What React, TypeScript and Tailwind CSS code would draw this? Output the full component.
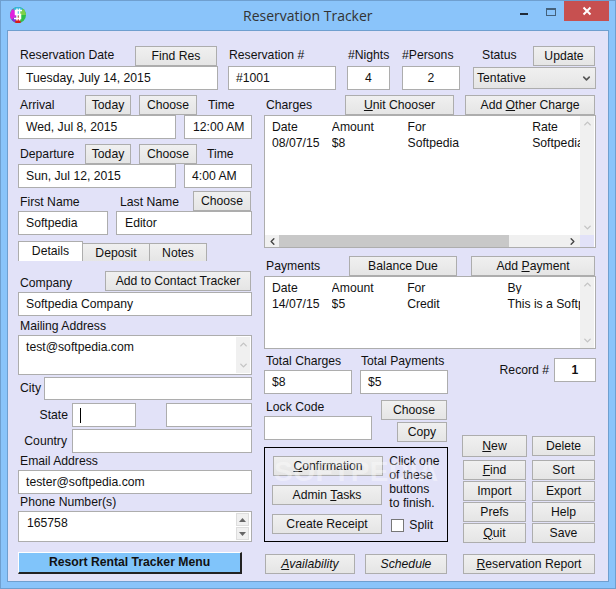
import React from "react";
import { ChevronDown, ChevronLeft, ChevronRight, ChevronUp } from "lucide-react";

type BtnProps = { children: React.ReactNode; className?: string };

// Old-style gradient push button. Width/height come in through className.
function Btn({ children, className = "" }: BtnProps) {
  return (
    <button className={`flex h-5 shrink-0 items-center justify-center border border-[#adadad] bg-gradient-to-b from-[#f0f0f0] to-[#e5e5e5] text-[#111] ${className}`}>
      {children}
    </button>
  );
}

function Field({ value, className = "", align = "pl-[7px]" }: { value?: string; className?: string; align?: string }) {
  return (
    <div className={`flex h-6 shrink-0 items-center truncate border border-[#adadad] bg-white text-[#111] ${align} ${className}`}>
      {value}
    </div>
  );
}

function VScroll({ className = "" }: { className?: string }) {
  return (
    <div className={`flex w-[14px] shrink-0 flex-col items-center justify-between bg-[#f0f0f0] py-[2px] text-[#c4c4c4] ${className}`}>
      <ChevronUp size={11} strokeWidth={3} />
      <ChevronDown size={11} strokeWidth={3} />
    </div>
  );
}

function Row({ cells, cols }: { cells: string[]; cols: string[] }) {
  return (
    <div className="flex h-4 items-center whitespace-nowrap">
      {cells.map((c, i) => (
        <div key={c} className={`overflow-hidden ${cols[i]}`}>{c}</div>
      ))}
    </div>
  );
}

function AppIcon() {
  return (
    <svg width="16" height="16" viewBox="0 0 16 16" className="shrink-0">
      <circle cx="8" cy="8" r="8" fill="#2fbf4a" />
      <path d="M8 8 L3 1.8 A8 8 0 0 1 13 1.8 Z" fill="#35b5dc" />
      <path d="M8 8 L13 1.8 A8 8 0 0 1 16 8 Z" fill="#7fd04a" />
      <path d="M8 8 L3 1.8 A8 8 0 0 0 1.5 12.7 Z" fill="#e020e0" />
      <path d="M8 8 L1.5 12.7 A8 8 0 0 0 5 15.4 Z" fill="#8a2ce0" />
      <path d="M8 8 L5 15.4 A8 8 0 0 0 11 15.4 Z" fill="#d81818" />
      <path d="M12 3.5 H5.5 V7.5 H10.5 V11.5 H4 M7 1.5 V13.5 M9.5 1.5 V13.5" stroke="#fff" strokeWidth="1.5" fill="none" />
    </svg>
  );
}

const chargeCols = ["w-[60px]", "w-[76px]", "w-[125px]", "w-[48px]"];
const paymentCols = ["w-[60px]", "w-[76px]", "w-[101px]", "w-[73px]"];

export default function App() {
  return (
    <div className="flex h-[589px] w-[616px] flex-col border border-[#6f9fcf] bg-[#8ac4fa] font-['Liberation_Sans',Arial,sans-serif] text-[12.2px] leading-none text-[#111]">
      {/* title bar */}
      <div className="flex h-[29px] shrink-0 items-start">
        <div className="mt-[6px] ml-[9px]"><AppIcon /></div>
        <div className="mt-[5px] flex-1 pl-[217px] font-['Open_Sans',sans-serif] text-[14px] leading-[20px] text-[#333]">Reservation Tracker</div>
        <div className="mt-[12px] h-[2px] w-[8px] bg-[#1f2a38]" />
        <div className="mt-[7px] ml-[18px] h-[8px] w-[10px] border border-t-2 border-[#44617b]" />
        <div className="mr-[6px] ml-[8px] flex h-[20px] w-[45px] items-center justify-center bg-[#c75050]">
          <svg width="10" height="10" viewBox="0 0 10 10"><path d="M1.5 1.5 L8.5 8.5 M8.5 1.5 L1.5 8.5" stroke="#fff" strokeWidth="2" /></svg>
        </div>
      </div>

      {/* client area */}
      <div className="ml-[6px] flex h-[552px] w-[602px] flex-col border border-[#6f9fcf] bg-[#e2e2f8] pt-[15px] pl-[10px]">
        {/* top row */}
        <div className="flex">
          <div className="w-[200px]">
            <div className="flex h-5 items-center pl-[2px]"><span className="-mt-[2px] w-[115px]">Reservation Date</span><Btn className="w-[82px]">Find Res</Btn></div>
            <Field value="Tuesday, July 14, 2015" className="w-[200px]" />
          </div>
          <div className="ml-[10px] w-[108px]">
            <div className="flex h-5 items-center pb-[2px] pl-[1px]">Reservation #</div>
            <Field value="#1001" />
          </div>
          <div className="ml-[11px] w-[43px]">
            <div className="flex h-5 items-center pb-[2px] pl-[1px] whitespace-nowrap">#Nights</div>
            <Field value="4" align="justify-center" />
          </div>
          <div className="ml-[12px] w-[58px]">
            <div className="flex h-5 items-center pb-[2px] whitespace-nowrap">#Persons</div>
            <Field value="2" align="justify-center" />
          </div>
          <div className="ml-[13px] w-[123px]">
            <div className="flex h-5 items-center pl-[9px]"><span className="-mt-[2px] w-[51px]">Status</span><Btn className="w-[62px]">Update</Btn></div>
            <div className="mt-[1px] flex h-[22px] items-center justify-between border border-[#adadad] bg-gradient-to-b from-[#f0f0f0] to-[#e5e5e5] pr-[3px] pl-[3px]">
              Tentative
              <ChevronDown size={11} strokeWidth={3.5} className="text-[#555]" />
            </div>
          </div>
        </div>

        <div className="mt-[5px] flex">
          {/* left column */}
          <div className="w-[234px]">
            <div className="flex h-5 items-center pl-[2px]">
              <span className="w-[65px]">Arrival</span>
              <Btn className="w-[46px]">Today</Btn>
              <Btn className="ml-2 w-[58px]">Choose</Btn>
              <span className="ml-[11px]">Time</span>
            </div>
            <div className="flex gap-2">
              <Field value="Wed, Jul 8, 2015" className="w-[158px]" />
              <Field value="12:00 AM" className="w-[68px]" align="pl-2" />
            </div>
            <div className="mt-[5px] flex h-5 items-center pl-[2px]">
              <span className="w-[65px]">Departure</span>
              <Btn className="w-[46px]">Today</Btn>
              <Btn className="ml-2 w-[58px]">Choose</Btn>
              <span className="ml-[10px]">Time</span>
            </div>
            <div className="flex gap-2">
              <Field value="Sun, Jul 12, 2015" className="w-[158px]" />
              <Field value="4:00 AM" className="w-[68px]" />
            </div>
            <div className="mt-[3px] flex h-5 items-center pl-[2px]">
              <span className="mt-[2px] w-[100px]">First Name</span>
              <span className="mt-[2px] w-[73px]">Last Name</span>
              <Btn className="w-[58px]">Choose</Btn>
            </div>
            <div className="flex gap-2">
              <Field value="Softpedia" className="w-[90px]" />
              <Field value="Editor" className="w-[136px]" align="pl-2" />
            </div>

            {/* tabs */}
            <div className="mt-[6px] flex h-5 items-end">
              <div className="flex h-5 w-[65px] items-center justify-center border border-b-0 border-[#adadad] bg-white">Details</div>
              <div className="flex h-[18px] w-[67px] items-center justify-center border-y border-r border-b-0 border-[#adadad] bg-gradient-to-b from-[#f0f0f0] to-[#e5e5e5] pt-px">Deposit</div>
              <div className="flex h-[18px] w-[57px] items-center justify-center border-y border-r border-b-0 border-[#adadad] bg-gradient-to-b from-[#f0f0f0] to-[#e5e5e5] pt-px">Notes</div>
            </div>

            <div className="mt-[10px] flex h-[21px] items-end pl-[2px]">
              <span className="w-[85px] pb-[3px]">Company</span>
              <Btn className="mb-[1px] w-[146px]">Add to Contact Tracker</Btn>
            </div>
            <Field value="Softpedia Company" />
            <div className="flex h-[19px] items-center pt-px pl-[2px]">Mailing Address</div>
            <div className="flex h-10 border border-[#adadad] bg-white">
              <div className="flex-1 pt-[5px] pl-[7px]">test@softpedia.com</div>
              <VScroll className="mr-[1px] my-px" />
            </div>
            <div className="mt-[2px] flex items-center">
              <span className="w-[26px] pl-[2px]">City</span>
              <Field className="h-[23px] w-[208px]" />
            </div>
            <div className="mt-[3px] flex items-center">
              <span className="w-[54px] pr-[4px] text-right">State</span>
              <div className="flex h-6 w-[64px] items-center border border-[#adadad] bg-white pl-[7px]">
                <div className="h-[15px] w-px bg-black" />
              </div>
              <Field className="ml-[30px] w-[86px]" />
            </div>
            <div className="mt-[2px] flex items-center">
              <span className="w-[54px] pr-[5px] text-right">Country</span>
              <Field className="w-[180px]" />
            </div>
            <div className="flex h-[17px] items-center pl-[2px]">Email Address</div>
            <Field value="tester@softpedia.com" />
            <div className="flex h-[17px] items-center pl-[2px]">Phone Number(s)</div>
            <div className="flex h-[31px] border border-[#adadad] bg-white">
              <div className="flex-1 pt-[5px] pl-2">165758</div>
              <div className="m-px mr-[2px] flex w-[13px] flex-col gap-px text-[#666]">
                <div className="flex flex-1 items-center justify-center border border-[#ddd] bg-[#f0f0f0]">
                  <svg width="7" height="4" viewBox="0 0 7 4"><path d="M3.5 0 L7 4 H0 Z" fill="#666" /></svg>
                </div>
                <div className="flex flex-1 items-center justify-center border border-[#ddd] bg-[#f0f0f0]">
                  <svg width="7" height="4" viewBox="0 0 7 4"><path d="M0 0 H7 L3.5 4 Z" fill="#666" /></svg>
                </div>
              </div>
            </div>
            <button className="mt-[10px] flex h-[22px] w-[224px] items-center justify-center border-t border-r-2 border-b-2 border-l border-t-white border-r-[#222] border-b-[#222] border-l-white bg-[#80c4fa] font-bold">
              Resort Rental Tracker Menu
            </button>
          </div>

          {/* right column */}
          <div className="ml-[12px] w-[332px]">
            <div className="flex h-5 items-center pl-[2px]">
              <span className="w-[79px]">Charges</span>
              <Btn className="w-[109px]"><span><u>U</u>nit Chooser</span></Btn>
              <Btn className="ml-[11px] w-[130px]"><span>Add <u>O</u>ther Charge</span></Btn>
            </div>
            <div className="flex h-[133px] border border-[#adadad] bg-white">
              <div className="flex min-w-0 flex-1 flex-col">
                <div className="flex-1 pt-[3px] pl-[7px]">
                  <Row cells={["Date", "Amount", "For", "Rate"]} cols={chargeCols} />
                  <Row cells={["08/07/15", "$8", "Softpedia", "Softpedia"]} cols={chargeCols} />
                </div>
                <div className="flex h-3 items-center bg-[#f0f0f0] text-[#444]">
                  <ChevronLeft size={11} strokeWidth={3} className="ml-[2px] shrink-0" />
                  <div className="ml-[1px] h-full w-[230px] bg-[#c8c8c8]" />
                  <div className="flex-1" />
                  <ChevronRight size={11} strokeWidth={3} className="mr-[2px] shrink-0" />
                </div>
              </div>
              <div className="mr-px flex w-[14px] shrink-0 flex-col">
                <VScroll className="flex-1" />
                <div className="h-3 bg-[#e2e2f8]" />
              </div>
            </div>

            <div className="mt-2 flex h-5 items-center pl-[2px]">
              <span className="w-[83px]">Payments</span>
              <Btn className="w-[108px]">Balance Due</Btn>
              <Btn className="ml-[14px] w-[124px]"><span>Add <u>P</u>ayment</span></Btn>
            </div>
            <div className="flex h-[73px] border border-[#adadad] bg-white">
              <div className="min-w-0 flex-1 pt-[3px] pl-[7px]">
                <Row cells={["Date", "Amount", "For", "By"]} cols={paymentCols} />
                <Row cells={["14/07/15", "$5", "Credit", "This is a Softpedia"]} cols={paymentCols} />
              </div>
              <VScroll className="mr-px" />
            </div>

            <div className="flex">
              {/* totals, lock code, finish box */}
              <div className="w-[184px]">
                <div className="flex h-[21px] items-center pt-[3px] pl-[2px] whitespace-nowrap">
                  <span className="w-[95px]">Total Charges</span>
                  <span>Total Payments</span>
                </div>
                <div className="flex gap-2">
                  <Field value="$8" className="w-[88px]" />
                  <Field value="$5" className="w-[88px]" />
                </div>
                <div className="mt-[6px] flex">
                  <div className="w-[117px]">
                    <div className="flex h-4 items-center pb-[2px] pl-[2px]">Lock Code</div>
                    <Field className="w-[108px]" />
                  </div>
                  <div className="flex w-[66px] flex-col items-end gap-[2px]">
                    <Btn className="w-[66px]">Choose</Btn>
                    <Btn className="w-[50px]">Copy</Btn>
                  </div>
                </div>
                <div className="relative mt-[5px] flex h-[95px] border border-black pt-2 pl-[7px]">
                  <div className="flex w-[118px] flex-col gap-[9px]">
                    <Btn className="ml-px w-[110px]"><span><u>C</u>onfirmation</span></Btn>
                    <Btn className="w-[110px]"><span>Admin <u>T</u>asks</span></Btn>
                    <Btn className="w-[110px]">Create Receipt</Btn>
                  </div>
                  <div className="-mt-[2px] w-[58px] leading-[14px]">
                    <div>Click one</div>
                    <div>of these</div>
                    <div>buttons</div>
                    <div>to finish.</div>
                    <div className="mt-2 ml-[2px] flex items-center gap-[5px]">
                      <div className="h-[13px] w-[13px] border border-[#777] bg-white" />
                      Split
                    </div>
                  </div>
                  {/* watermark lying over the buttons */}
                  <div className="pointer-events-none absolute top-[10px] left-[9px] text-[28px] leading-none font-bold tracking-[0.5px] text-white opacity-35">SOFTPEDIA</div>
                </div>
              </div>

              {/* record number and action buttons */}
              <div className="ml-[14px] w-[134px] pt-[9px]">
                <div className="flex h-6 items-center justify-end">
                  <span className="mr-[5px]">Record #</span>
                  <div className="flex h-6 w-[42px] items-center justify-center border border-[#adadad] bg-white font-bold">1</div>
                </div>
                <div className="mt-[53px] flex h-[22px] items-center">
                  <Btn className="h-[22px] w-[65px] border-[#3c9bf0]"><span><u>N</u>ew</span></Btn>
                  <Btn className="ml-[5px] w-[63px]">Delete</Btn>
                </div>
                <div className="mt-[3px] ml-px grid w-[132px] grid-cols-[63px_63px] gap-x-[6px] gap-y-px">
                  <Btn className="w-full"><span><u>F</u>ind</span></Btn>
                  <Btn className="w-full">Sort</Btn>
                  <Btn className="w-full">Import</Btn>
                  <Btn className="w-full">Export</Btn>
                  <Btn className="w-full">Prefs</Btn>
                  <Btn className="w-full">Help</Btn>
                  <Btn className="w-full"><span><u>Q</u>uit</span></Btn>
                  <Btn className="w-full">Save</Btn>
                </div>
              </div>
            </div>

            <div className="mt-[11px] flex pl-px">
              <Btn className="w-[90px] italic"><span><u>A</u>vailability</span></Btn>
              <Btn className="ml-[10px] w-[82px] italic">Schedule</Btn>
              <Btn className="ml-[16px] w-[132px]"><span><u>R</u>eservation Report</span></Btn>
            </div>
          </div>
        </div>
      </div>
    </div>
  );
}
